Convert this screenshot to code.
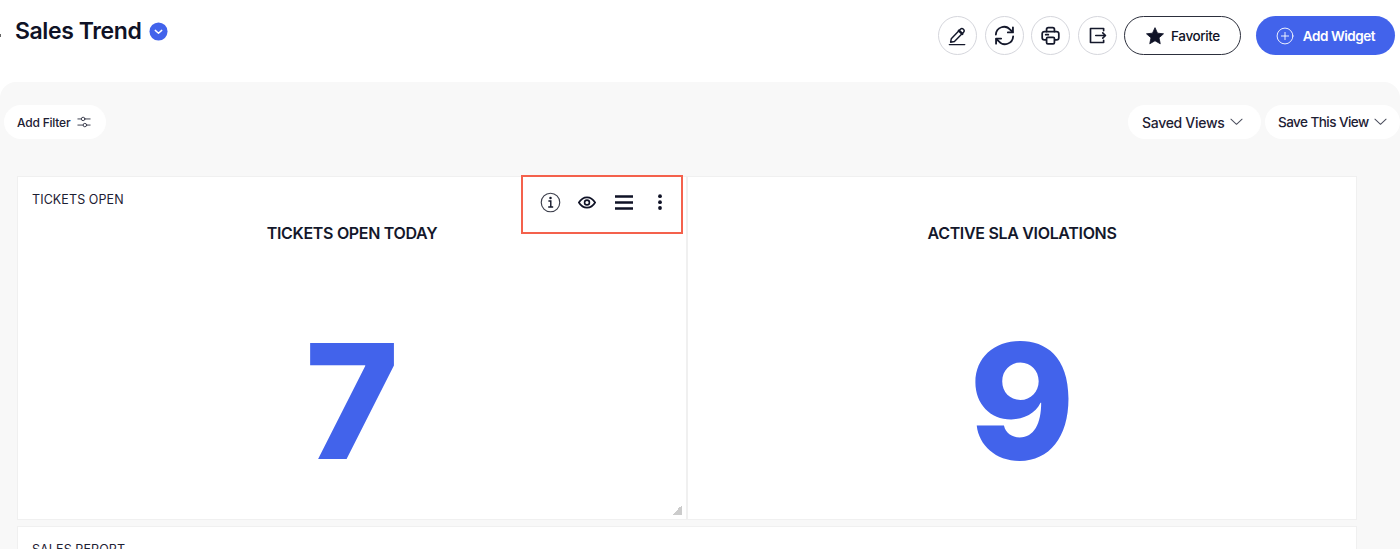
<script>
</script>

<div class="page">
  <header class="top">
    <div class="title-wrap">
      <span class="nub"></span>
      <h1>Sales Trend</h1>
      <span class="chev-badge">
        <svg viewBox="0 0 20 20" width="19" height="19"><circle cx="10" cy="10" r="9.5" fill="#4263eb"/><path d="M6.6 8.8 10 11.8l3.4-3" fill="none" stroke="#fff" stroke-width="1.5" stroke-linecap="round" stroke-linejoin="round"/></svg>
      </span>
    </div>
    <div class="actions">
      <button class="round" aria-label="Edit">
        <svg viewBox="0 0 24 24" width="23" height="23" fill="none" stroke="#14182b" stroke-width="1.5" stroke-linecap="round" stroke-linejoin="round"><path d="M5.500 15.500 15 5.500a2.300 2.300 0 0 1 3.300 3.200L8.800 18.200l-4 .8z"/><path d="m13.500 7 3.500 3.300" stroke-width="2.600"/><path d="M3.500 21.500h16"/></svg>
      </button>
      <button class="round" aria-label="Refresh">
        <svg viewBox="0 0 24 24" width="23" height="23" fill="none" stroke="#14182b" stroke-width="1.900" stroke-linecap="round" stroke-linejoin="round"><path d="M3 11a8.500 8.500 0 0 1 15-5l2.500 2.500"/><path d="M20.800 3.500v5.300h-5.300"/><path d="M21 13a8.500 8.500 0 0 1-15 5l-2.500-2.500"/><path d="M3.200 20.500v-5.300h5.300"/></svg>
      </button>
      <button class="round" aria-label="Print">
        <svg viewBox="0 0 24 24" width="21" height="21" fill="none" stroke="#14182b" stroke-width="2" stroke-linecap="round" stroke-linejoin="round"><path d="M7.500 7.500V5a2 2 0 0 1 2-2h5a2 2 0 0 1 2 2v2.500"/><path d="M7 17H5a2.500 2.500 0 0 1-2.500-2.500v-4.500a2.500 2.500 0 0 1 2.500-2.500h14a2.500 2.500 0 0 1 2.500 2.500v4.500A2.500 2.500 0 0 1 19 17h-2"/><rect x="7.500" y="14" width="9" height="7.500" rx="1.500"/><path d="M6.500 11h3"/></svg>
      </button>
      <button class="round" aria-label="Export">
        <svg viewBox="0 0 24 24" width="21" height="21" fill="none" stroke="#14182b" stroke-width="1.900" stroke-linecap="round" stroke-linejoin="round"><path d="M19 6.500V4H4v16h15v-2.500"/><path d="M10 12h11"/><path d="m18 9 3 3-3 3"/></svg>
      </button>
      <button class="fav">
        <svg viewBox="0 0 24 24" width="20" height="20"><path d="m12 2 3 6.600 7.200.8-5.400 4.800 1.500 7.100L12 17.700l-6.300 3.600 1.500-7.100L1.800 9.400 9 8.600z" fill="#0f1226" stroke="#0f1226" stroke-width="1" stroke-linejoin="round"/></svg>
        Favorite
      </button>
      <button class="add">
        <svg viewBox="0 0 20 20" width="18" height="18" fill="none" stroke="#fff" stroke-width="1" stroke-linecap="round"><circle cx="10" cy="10" r="8.800"/><path d="M10 6v8M6 10h8"/></svg>
        Add Widget
      </button>
    </div>
  </header>

  <main class="body">
    <div class="filters">
      <button class="pill filter">
        Add Filter
        <svg viewBox="0 0 16 16" width="14" height="14" fill="none" stroke="#3a3d4d" stroke-width="1.100" stroke-linecap="round"><path d="M1 4.500h4M9 4.500h6M1 11.500h6M11 11.500h4"/><circle cx="7" cy="4.500" r="2"/><circle cx="9" cy="11.500" r="2"/></svg>
      </button>
      <div class="views">
        <button class="pill saved">
          Saved Views
          <svg viewBox="0 0 14 8" width="13" height="8" fill="none" stroke="#4a4d5c" stroke-width="1.100" stroke-linecap="round" stroke-linejoin="round"><path d="m1 1 6 5.500L13 1"/></svg>
        </button>
        <button class="pill save-this">
          Save This View
          <svg viewBox="0 0 14 8" width="13" height="8" fill="none" stroke="#4a4d5c" stroke-width="1.100" stroke-linecap="round" stroke-linejoin="round"><path d="m1 1 6 5.500L13 1"/></svg>
        </button>
      </div>
    </div>

    <div class="grid">
      <section class="card">
        <div class="card-label">TICKETS OPEN</div>
        <h2>TICKETS OPEN TODAY</h2>
        <div class="big">7</div>
        <div class="tools">
          <svg viewBox="0 0 22 22" width="21" height="21" fill="none"><circle cx="11" cy="11" r="9.700" stroke="#3c3f4c" stroke-width="1.200"/><circle cx="11" cy="6.300" r="1.300" fill="#14182b"/><path d="M8.800 9.500H11.300V15.800M8.600 15.800h5.200" stroke="#14182b" stroke-width="1.500"/></svg>
          <svg class="eye" viewBox="0 0 20 14" width="18" height="13" fill="none" stroke="#0f1226"><path d="M1 7c2.200-3.700 5.200-5.800 9-5.800S16.800 3.300 19 7c-2.200 3.700-5.200 5.800-9 5.800S3.200 10.700 1 7z" stroke-width="1.900"/><circle cx="10" cy="7" r="2.700" stroke-width="1.800"/></svg>
          <svg class="menu" viewBox="0 0 18 15" width="18" height="15" fill="none" stroke="#0f1226" stroke-width="2.500"><path d="M0 1.500h18M0 7.500h18M0 13.500h18"/></svg>
          <svg class="dots" viewBox="0 0 4 16" width="4" height="16" fill="#0f1226"><circle cx="2" cy="2.200" r="1.900"/><circle cx="2" cy="8.200" r="1.900"/><circle cx="2" cy="14" r="1.900"/></svg>
        </div>
        <span class="resize"></span>
      </section>
      <section class="card">
        <div class="card-label">&nbsp;</div>
        <h2>ACTIVE SLA VIOLATIONS</h2>
        <div class="big">9</div>
      </section>
      <section class="card wide">
        <div class="card-label">SALES REPORT</div>
      </section>
    </div>
  </main>
</div>

<style>
  :global(body) {
    margin: 0;
    background: #fff;
  }
  .page {
    width: 1400px;
    height: 549px;
    overflow: hidden;
    font-family: Inter, "Liberation Sans", sans-serif;
    color: #0f1226;
  }
  .top {
    height: 82px;
    display: flex;
    justify-content: space-between;
    align-items: flex-start;
    padding-right: 5px;
    box-sizing: border-box;
  }
  .title-wrap {
    display: flex;
    align-items: center;
    gap: 8px;
    padding: 16px 0 0 15px;
    position: relative;
  }
  .nub {
    position: absolute;
    left: 0;
    top: 34px;
    width: 1px;
    height: 3px;
    background: #666;
  }
  h1 {
    margin: 0;
    font-size: 23px;
    line-height: 30px;
    font-weight: 600;
    letter-spacing: -0.400px;
  }
  .chev-badge {
    display: flex;
  }
  .actions {
    display: flex;
    align-items: center;
    padding-top: 16px;
    gap: 7.500px;
  }
  button {
    font-family: inherit;
    color: inherit;
    cursor: pointer;
    padding: 0;
  }
  .round {
    width: 39px;
    height: 39px;
    border-radius: 50%;
    border: 1px solid #d5d6dc;
    background: #fff;
    display: flex;
    align-items: center;
    justify-content: center;
    box-sizing: border-box;
  }
  .fav {
    width: 117px;
    height: 39px;
    border-radius: 20px;
    border: 1px solid #2c2f3c;
    background: #fff;
    display: flex;
    align-items: center;
    justify-content: center;
    gap: 6px;
    font-size: 13.500px;
    letter-spacing: -0.400px;
    font-weight: 500;
    box-sizing: border-box;
  }
  .add {
    width: 139px;
    height: 39px;
    margin-left: 7.500px;
    border: 0;
    border-radius: 20px;
    background: #4263eb;
    color: #fff;
    display: flex;
    align-items: center;
    justify-content: center;
    gap: 9px;
    font-size: 13.500px;
    letter-spacing: -0.450px;
    font-weight: 600;
  }
  .body {
    height: 467px;
    background: #f8f8f8;
    border-radius: 16px 16px 0 0;
    padding: 23px 0 0 0;
    box-sizing: border-box;
  }
  .filters {
    display: flex;
    justify-content: space-between;
    padding: 0 0 0 4px;
    height: 34px;
  }
  .views {
    display: flex;
    gap: 4px;
  }
  .pill {
    height: 34px;
    border: 0;
    border-radius: 17px;
    background: #fff;
    display: flex;
    align-items: center;
    color: #1d2033;
    box-sizing: border-box;
  }
  .filter {
    width: 102px;
    padding-left: 13px;
    gap: 7px;
    font-size: 12px;
    letter-spacing: -0.200px;
    font-weight: 500;
  }
  .saved {
    width: 133px;
    padding-left: 14px;
    gap: 6px;
    font-size: 14px;
    letter-spacing: -0.300px;
    font-weight: 500;
  }
  .save-this {
    width: 135px;
    padding-left: 13px;
    gap: 5px;
    font-size: 13.500px;
    letter-spacing: -0.550px;
    font-weight: 500;
  }
  .grid {
    margin: 37px 0 0 17px;
    width: 1340px;
    display: grid;
    grid-template-columns: 670px 670px;
    grid-template-rows: 344px 100px;
    gap: 6px 0;
  }
  .card {
    background: #fff;
    border: 1px solid #f0f0f0;
    box-sizing: border-box;
    position: relative;
    text-align: center;
    padding-top: 15px;
  }
  .wide {
    grid-column: 1 / 3;
  }
  .card-label {
    text-align: left;
    padding-left: 14px;
    font-size: 12.500px;
    line-height: 16px;
    letter-spacing: 0.100px;
    color: #1d2033;
  }
  h2 {
    margin: 15px 0 0;
    font-size: 16px;
    line-height: 20px;
    font-weight: 600;
    letter-spacing: -0.320px;
    color: #14182b;
  }
  .big {
    margin-top: 58px;
    font-size: 160px;
    line-height: 200px;
    font-weight: 800;
    color: #4263eb;
  }
  .tools {
    position: absolute;
    left: 503px;
    top: -2px;
    width: 162px;
    height: 59px;
    border: 2px solid #f4614c;
    box-sizing: border-box;
    display: flex;
    align-items: center;
    padding: 0 0 5px 17px;
  }
  .eye { margin-left: 17px; }
  .menu { margin-left: 19px; }
  .dots { margin-left: 25px; }
  .resize {
    position: absolute;
    right: 4px;
    bottom: 4px;
    width: 10px;
    height: 10px;
    background: linear-gradient(135deg, transparent 50%, #ccc 50%);
  }
</style>
